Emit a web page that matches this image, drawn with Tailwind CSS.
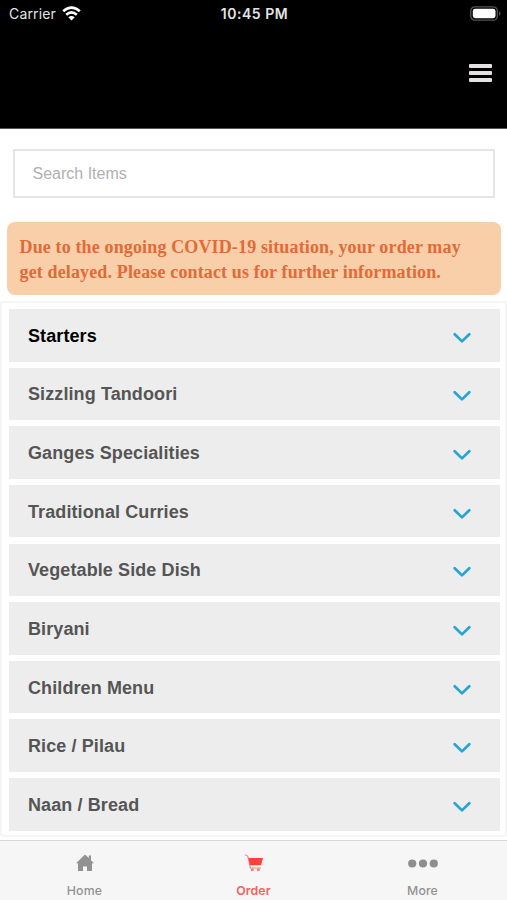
<!DOCTYPE html>
<html lang="en">
<head>
<meta charset="utf-8">
<title>Order</title>
<script src="https://cdn.jsdelivr.net/npm/@tailwindcss/browser@4"></script>
</head>
<body class="bg-white font-['Liberation_Sans',sans-serif]">
<div class="w-[507px] h-[900px] flex flex-col overflow-hidden">
  <header class="h-[129px] shrink-0 bg-black border-b border-[#555] flex flex-col">
    <div class="h-7 grid grid-cols-3 items-center pl-[9px] pr-[6px] font-[Inter,sans-serif] text-[14px] text-[#e4e4e4]">
      <div class="flex items-center gap-[6px]">
        <span class="tracking-[0.15px] -mt-[2px]">Carrier</span>
        <svg class="w-[19px] h-[15px] -mt-[2px]" viewBox="0 0 19 15" fill="none" stroke="#fff" stroke-width="2.7"><path d="M1.2 5.3Q9.5-2 17.8 5.3M4.2 8.7Q9.5 4.1 14.8 8.7"/><path d="M9.5 14.5L6.3 11.2Q9.5 8.6 12.7 11.2Z" fill="#fff" stroke="none"/></svg>
      </div>
      <span class="text-center font-semibold tracking-[0.55px] whitespace-nowrap -ml-[1px] -mt-[2px]">10:45 PM</span>
      <svg class="w-[31px] h-[15px] justify-self-end -mt-[2px]" viewBox="0 0 31 15"><rect x=".8" y=".8" width="26.5" height="13.4" rx="4" fill="none" stroke="#555" stroke-width="1.3"/><rect x="2.8" y="2.8" width="22.7" height="9.4" rx="2.4" fill="#fff"/><path d="M29 5q3 2.5 0 5z" fill="#555"/></svg>
    </div>
    <div class="flex justify-end pt-[36px] pr-[15px]">
      <div class="w-[23px] flex flex-col gap-[3px]">
        <i class="h-[4px] rounded-[1px] bg-[#e3e1e1]"></i>
        <i class="h-[4px] rounded-[1px] bg-[#e3e1e1]"></i>
        <i class="h-[4px] rounded-[1px] bg-[#e3e1e1]"></i>
      </div>
    </div>
  </header>
  <main class="h-[711px] shrink-0 overflow-hidden flex flex-col pt-5">
    <div class="ml-[13px] mr-[12px] h-[49px] shrink-0 border-2 border-[#e5e5e5] flex items-center pl-[17.5px] text-[16px] text-[#b0b0b0]"><span>Search Items</span></div>
    <div class="mt-[24px] ml-[7px] mr-[6px] h-[73px] shrink-0 rounded-[8px] bg-[#f8cfa8] pl-[12.5px] pt-[13px] text-[#e06b38] font-bold font-['Liberation_Serif',serif] text-[18px] leading-[24.5px] whitespace-nowrap">
      <p class="tracking-[0.14px]">Due to the ongoing COVID-19 situation, your order may</p>
      <p class="tracking-[0.14px]">get delayed. Please contact us for further information.</p>
    </div>
    <ul id="menu" class="mt-[6px] h-[536px] shrink-0 border-2 border-[#f5f5f5] rounded-[3px] pt-[6px] pl-[6.5px] pr-[5.5px] flex flex-col gap-[6.15px] text-[18px] font-bold tracking-[0.1px] text-[#555]"></ul>
  </main>
  <nav class="h-[60px] shrink-0 border-t border-[#d9d9da] bg-[#f7f6f7] grid grid-cols-3 text-[12.3px] font-[Inter,sans-serif] text-[#929292]">
    <div class="flex flex-col items-center pt-[13px]">
      <svg class="w-[18px] h-[18px]" viewBox="0 0 18 18" fill="#929292"><path d="M9 .5L0 9.2h2V17h5v-4.5h4V17h5V9.2h2L15 6.2V1.5h-2.2v2.6z"/></svg>
      <span class="mt-[11px] leading-[15px] font-medium tracking-[0.2px]">Home</span>
    </div>
    <div class="flex flex-col items-center pt-[13px] text-[#f0645c]">
      <svg class="w-[20px] h-[18px]" viewBox="0 0 20 18"><path d="M.8 1Q3.6.8 4 3L6.4 14H17" fill="none" stroke="#ee8a80" stroke-width="1.2"/><path d="M4.4 4H19l-2 7.2H6z" fill="#f4473a"/><circle cx="8.3" cy="15.7" r="1.5" fill="#ee8178"/><circle cx="14.4" cy="15.7" r="1.5" fill="#ee8178"/></svg>
      <span class="mt-[11px] leading-[15px] font-semibold tracking-[0.1px]">Order</span>
    </div>
    <div class="flex flex-col items-center pt-[13px]">
      <svg class="w-[30px] h-[18px]" viewBox="0 0 30 18" fill="#8e8e8e"><circle cx="4.2" cy="9.5" r="4.1"/><circle cx="15" cy="9.5" r="4.1"/><circle cx="25.8" cy="9.5" r="4.1"/></svg>
      <span class="mt-[11px] leading-[15px] font-medium tracking-[0.1px]">More</span>
    </div>
  </nav>
</div>
<script>
const items = ["Starters","Sizzling Tandoori","Ganges Specialities","Traditional Curries","Vegetable Side Dish","Biryani","Children Menu","Rice / Pilau","Naan / Bread"];
document.getElementById("menu").innerHTML = items.map((name, i) =>
  `<li class="h-[52.5px] shrink-0 bg-[#ededed] flex items-center justify-between pl-[19.5px] pr-[29px] ${i ? "" : "text-black"}"><span class="pt-[2px]">${name}</span><svg class="w-[18px] h-[12px] mt-[5px]" viewBox="0 0 18 12" fill="none" stroke="#24a5d6" stroke-width="2.7" stroke-linecap="round" stroke-linejoin="round"><path d="M1.7 2.2L9 9.4l7.3-7.2"/></svg></li>`).join("");
</script>
</body>
</html>
